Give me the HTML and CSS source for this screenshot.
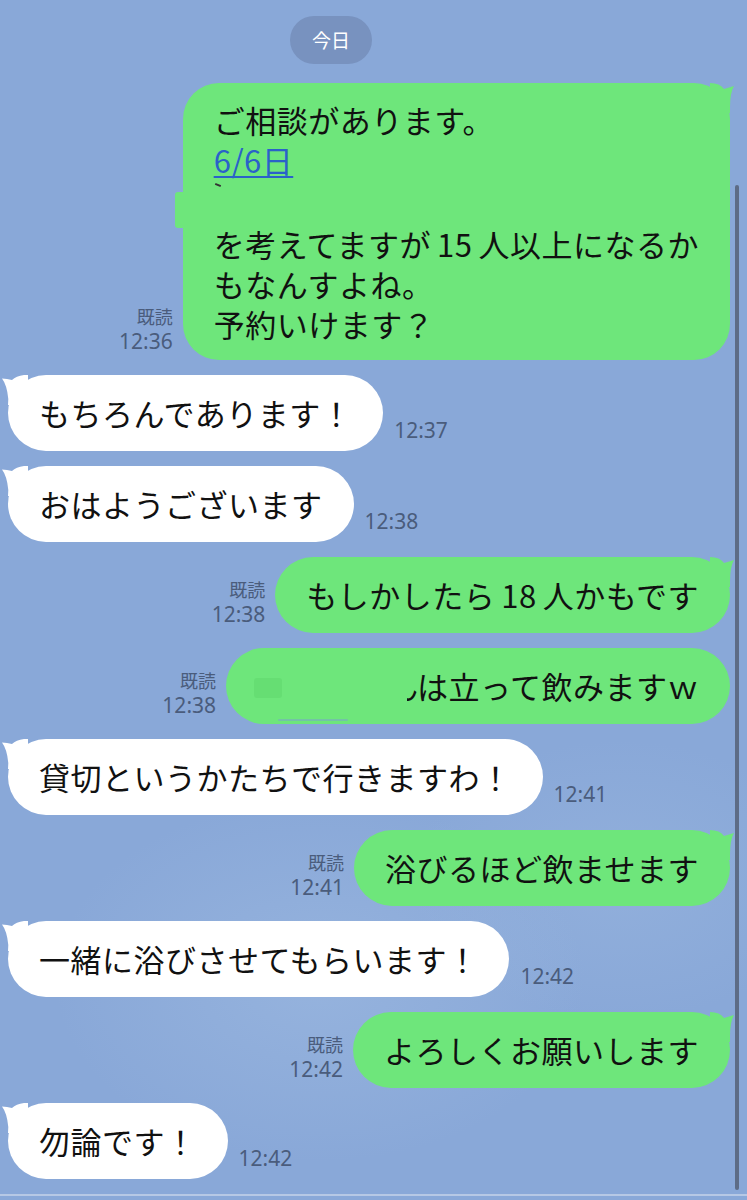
FILE: index.html
```html
<!DOCTYPE html>
<html lang="ja">
<head>
  <meta charset="UTF-8">
  <meta name="viewport" content="width=device-width, initial-scale=1.0">
  <title>トーク</title>
  <link rel="stylesheet" href="styles.css">
</head>
<body>
  <div class="screen">
    <div class="scrollbar"></div>

    <div class="date-row">
      <span class="date-pill">今日</span>
    </div>

    <div class="chat">
      <div class="row out first">
        <div class="meta">
          <span class="read">既読</span>
          <span class="time">12:36</span>
        </div>
        <div class="bubble green tall">
          <div>ご相談があります。</div>
          <div><a class="link" href="#">6/6日</a></div>
          <div class="line"><span class="mark"></span></div>
          <div>を考えてますが<span class="num">15</span>人以上になるか</div>
          <div>もなんすよね。</div>
          <div>予約いけます？</div>
          <svg class="tail tail-right" viewBox="0 0 26 30"><path d="M0 0 Q10 0 14 6 Q19 4.5 24 3 Q20 10 20 24 L20 30 L0 30 Z"/></svg>
        </div>
      </div>

      <div class="row in">
        <div class="bubble white">
          もちろんであります！
          <svg class="tail tail-left" viewBox="0 0 26 30"><path d="M26 0 L22 0 Q14 1 10 5 Q5 3.5 0 3.5 Q5 10 6.3 24 L6 30 L26 30 Z"/></svg>
        </div>
        <div class="meta"><span class="time">12:37</span></div>
      </div>

      <div class="row in">
        <div class="bubble white">
          おはようございます
          <svg class="tail tail-left" viewBox="0 0 26 30"><path d="M26 0 L22 0 Q14 1 10 5 Q5 3.5 0 3.5 Q5 10 6.3 24 L6 30 L26 30 Z"/></svg>
        </div>
        <div class="meta"><span class="time">12:38</span></div>
      </div>

      <div class="row out">
        <div class="meta">
          <span class="read">既読</span>
          <span class="time">12:38</span>
        </div>
        <div class="bubble green">
          もしかしたら<span class="num">18</span>人かもです
          <svg class="tail tail-right" viewBox="0 0 26 30"><path d="M0 0 Q10 0 14 6 Q19 4.5 24 3 Q20 10 20 24 L20 30 L0 30 Z"/></svg>
        </div>
      </div>

      <div class="row out">
        <div class="meta">
          <span class="read">既読</span>
          <span class="time">12:38</span>
        </div>
        <div class="bubble green">
          <span class="hidden-part"><span class="smudge"></span></span><span class="cut"><span>ん</span></span>は立って飲みますｗ
          <span class="blur-line"></span>
        </div>
      </div>

      <div class="row in">
        <div class="bubble white">
          貸切というかたちで行きますわ！
          <svg class="tail tail-left" viewBox="0 0 26 30"><path d="M26 0 L22 0 Q14 1 10 5 Q5 3.5 0 3.5 Q5 10 6.3 24 L6 30 L26 30 Z"/></svg>
        </div>
        <div class="meta"><span class="time">12:41</span></div>
      </div>

      <div class="row out">
        <div class="meta">
          <span class="read">既読</span>
          <span class="time">12:41</span>
        </div>
        <div class="bubble green">
          浴びるほど飲ませます
          <svg class="tail tail-right" viewBox="0 0 26 30"><path d="M0 0 Q10 0 14 6 Q19 4.5 24 3 Q20 10 20 24 L20 30 L0 30 Z"/></svg>
        </div>
      </div>

      <div class="row in">
        <div class="bubble white">
          一緒に浴びさせてもらいます！
          <svg class="tail tail-left" viewBox="0 0 26 30"><path d="M26 0 L22 0 Q14 1 10 5 Q5 3.5 0 3.5 Q5 10 6.3 24 L6 30 L26 30 Z"/></svg>
        </div>
        <div class="meta"><span class="time">12:42</span></div>
      </div>

      <div class="row out">
        <div class="meta">
          <span class="read">既読</span>
          <span class="time">12:42</span>
        </div>
        <div class="bubble green">
          よろしくお願いします
          <svg class="tail tail-right" viewBox="0 0 26 30"><path d="M0 0 Q10 0 14 6 Q19 4.5 24 3 Q20 10 20 24 L20 30 L0 30 Z"/></svg>
        </div>
      </div>

      <div class="row in">
        <div class="bubble white">
          勿論です！
          <svg class="tail tail-left" viewBox="0 0 26 30"><path d="M26 0 L22 0 Q14 1 10 5 Q5 3.5 0 3.5 Q5 10 6.3 24 L6 30 L26 30 Z"/></svg>
        </div>
        <div class="meta"><span class="time">12:42</span></div>
      </div>
    </div>
  </div>
</body>
</html>
```

FILE: styles.css
```css
body {
  margin: 0;
  padding: 0;
  font-family: "Noto Sans CJK JP", "Noto Sans", sans-serif;
  background-color: #89a8d8;
  overflow: hidden;
}

.screen {
  position: relative;
  height: 1194px;
  border-bottom: 2px solid #b6c8e5;
  background:
    radial-gradient(ellipse 380px 260px at 320px 980px, rgba(160, 188, 226, 0.55), rgba(160, 188, 226, 0) 70%),
    radial-gradient(ellipse 300px 200px at 620px 880px, rgba(155, 184, 224, 0.45), rgba(155, 184, 224, 0) 70%),
    #89a8d8;
}

.scrollbar {
  position: absolute;
  left: 735px;
  top: 185px;
  width: 4px;
  height: 1005px;
  border-radius: 2px;
  background-color: #5d6c86;
}

.date-row {
  display: flex;
  padding: 16px 0 0 290px;
}

.date-pill {
  width: 82px;
  height: 48px;
  line-height: 48px;
  text-align: center;
  border-radius: 24px;
  background-color: #7892bf;
  color: #fff;
  font-size: 19px;
}

.chat {
  display: flex;
  flex-direction: column;
  gap: 15px;
  padding-top: 19px;
}

.row {
  display: flex;
  align-items: flex-end;
}

.row.out {
  justify-content: flex-end;
  gap: 10px;
  padding-right: 17px;
}

.row.in {
  gap: 11px;
  padding-left: 8px;
}

.meta {
  display: flex;
  flex-direction: column;
  align-items: flex-end;
  padding-bottom: 7px;
  color: #4a5c7c;
}

.row.in .meta {
  padding-bottom: 9px;
}

.read {
  font-size: 18px;
  line-height: 22px;
  margin-bottom: 2px;
}

.time {
  font-family: "Noto Sans", sans-serif;
  font-size: 21px;
  line-height: 24px;
}

.bubble {
  position: relative;
  padding: 18px 31px;
  border-radius: 38px;
  font-size: 31px;
  line-height: 40px;
  letter-spacing: 0.5px;
  color: #111;
  white-space: nowrap;
}

.bubble.green {
  background-color: #6ee67b;
}

.bubble.white {
  background-color: #fff;
}

.bubble.tall {
  padding: 17px 31px 16px;
  border-radius: 36px;
}

/* odd little green notch on the left of the first bubble */
.bubble.tall::before {
  content: "";
  position: absolute;
  left: -8px;
  top: 109px;
  width: 12px;
  height: 36px;
  border-radius: 3px 0 0 3px;
  background-color: #6ee67b;
}

.num {
  margin: 0 6px;
}

.link {
  color: #2a62c9;
  text-decoration: underline;
  text-decoration-thickness: 2px;
  text-underline-offset: 3px;
}

.line {
  height: 40px;
}

.mark {
  display: block;
  width: 6px;
  height: 2px;
  margin: 4px 0 0 1px;
  background-color: #333;
  transform: rotate(22deg);
}

.tail {
  position: absolute;
  top: 0;
  width: 26px;
  height: 30px;
}

.tail-right {
  right: -6px;
}

.tail-left {
  left: -6px;
}

.green .tail path {
  fill: #6ee67b;
}

.white .tail path {
  fill: #fff;
}

.hidden-part {
  display: inline-block;
  width: 150px;
  height: 40px;
  vertical-align: top;
}

.smudge {
  display: block;
  width: 28px;
  height: 20px;
  margin: 12px 0 0 -3px;
  border-radius: 3px;
  background-color: #66de73;
}

.cut {
  display: inline-block;
  width: 10px;
  overflow: hidden;
  vertical-align: top;
}

.cut span {
  display: inline-block;
  margin-left: -20px;
}

.blur-line {
  position: absolute;
  left: 52px;
  bottom: 3px;
  width: 70px;
  height: 2px;
  border-radius: 1px;
  background-color: rgba(120, 160, 210, 0.5);
}
```
